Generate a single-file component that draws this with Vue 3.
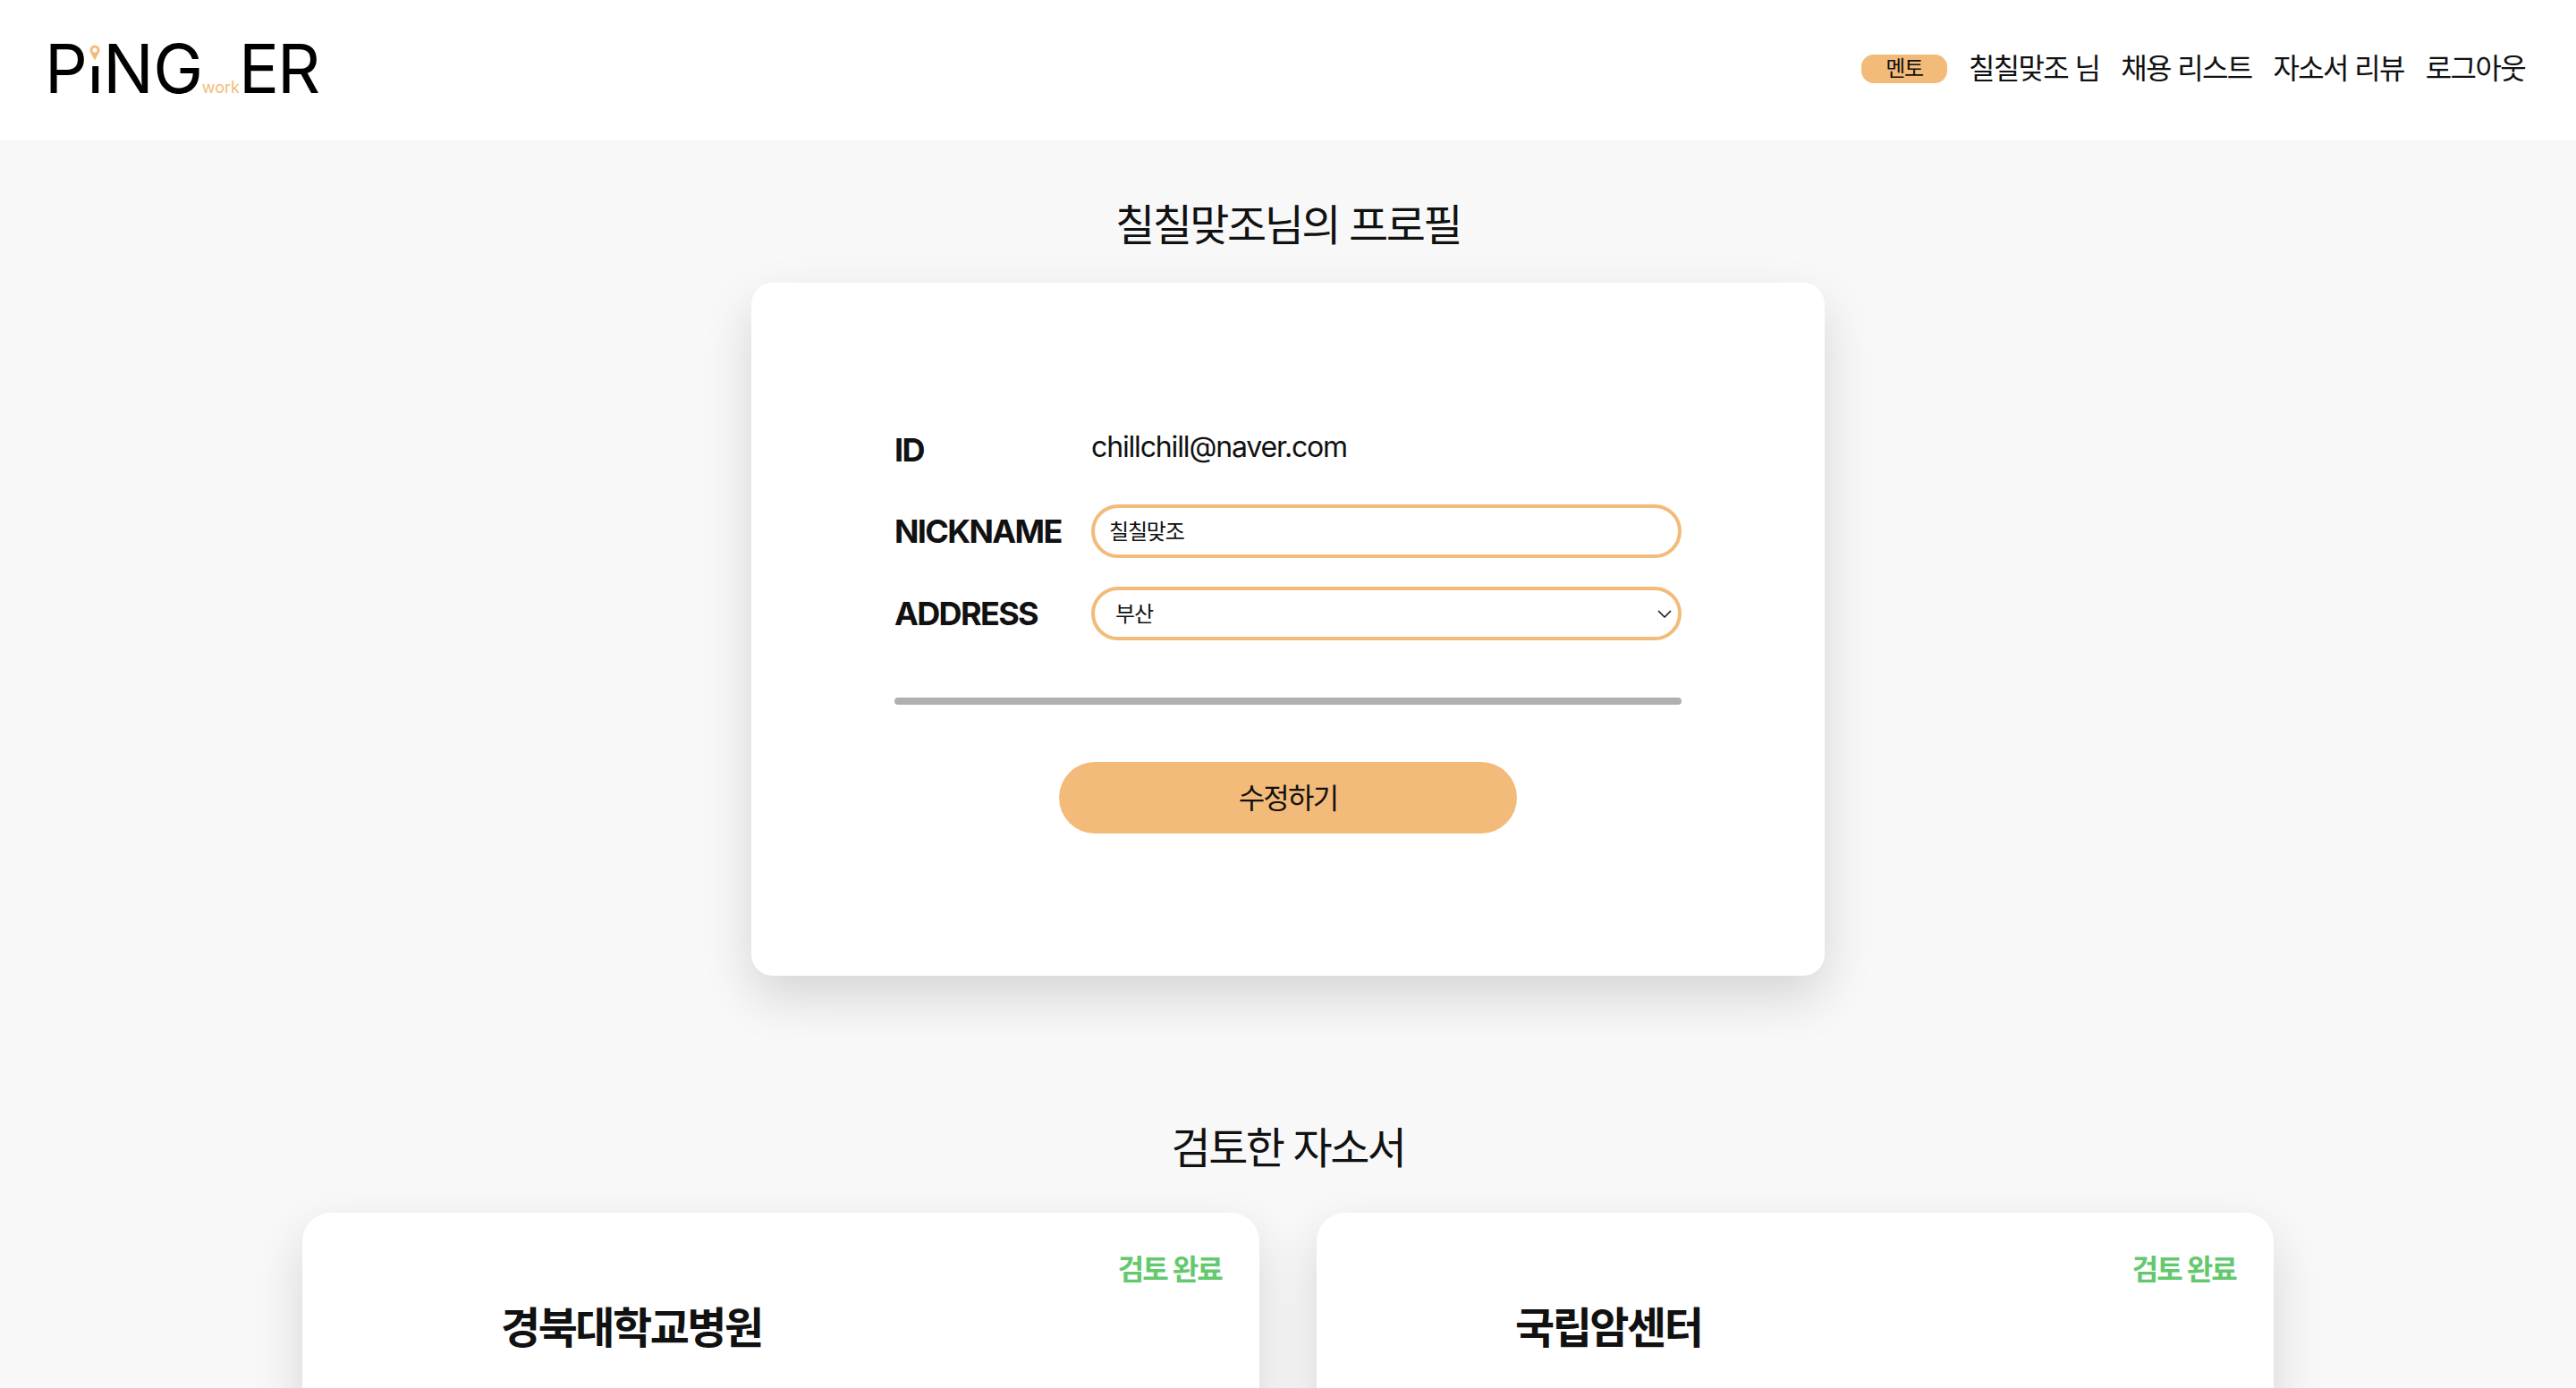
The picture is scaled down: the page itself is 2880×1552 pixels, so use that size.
<script setup>
const navItems = ['칠칠맞조 님', '채용 리스트', '자소서 리뷰', '로그아웃']
const reviews = [
  { id: 1, name: '경북대학교병원', status: '검토 완료' },
  { id: 2, name: '국립암센터', status: '검토 완료' }
]
</script>

<template>
  <div class="page">
    <header class="header">
      <div class="logo">
        <span>P</span>
        <span class="logo-i">
          ı
          <svg class="pin" viewBox="0 0 12 18" width="12" height="18">
            <path d="M6 .5a5.5 5.5 0 0 0-5.5 5.5c0 2.6 2.6 5.6 5.500 11.500C8.900 11.600 11.500 8.600 11.500 6A5.500 5.500 0 0 0 6 .5z" fill="#f3bb79" />
            <circle cx="6" cy="6" r="2.600" fill="#fff" />
          </svg>
        </span>
        <span>NG</span>
        <span class="logo-work">work</span>
        <span class="logo-er">ER</span>
      </div>
      <nav class="nav">
        <span class="badge">멘토</span>
        <a v-for="item in navItems" :key="item" class="nav-link">{{ item }}</a>
      </nav>
    </header>

    <main class="main">
      <h2 class="section-title">칠칠맞조님의 프로필</h2>
      <section class="profile-card">
        <div class="row row-id">
          <span class="label">ID</span>
          <span class="value">chillchill@naver.com</span>
        </div>
        <div class="row">
          <label class="label">NICKNAME</label>
          <input class="field field-input" value="칠칠맞조" />
        </div>
        <div class="row">
          <label class="label">ADDRESS</label>
          <div class="select-wrap">
            <select class="field field-select">
              <option>부산</option>
            </select>
            <svg class="chevron" viewBox="0 0 16 9" width="16" height="9">
              <path d="M1 1l7 7 7-7" fill="none" stroke="#111" stroke-width="1.500" />
            </svg>
          </div>
        </div>
        <div class="divider"></div>
        <button class="submit" type="button">수정하기</button>
      </section>

      <h2 class="section-title second">검토한 자소서</h2>
      <section class="reviews">
        <article v-for="r in reviews" :key="r.id" class="review-card">
          <div class="status">{{ r.status }}</div>
          <h3 class="review-name">{{ r.name }}</h3>
        </article>
      </section>
    </main>
  </div>
</template>

<style>
html, body { margin: 0; background: #f8f8f8; overflow: hidden; }
</style>

<style scoped>
.page {
  height: 1552px;
  overflow: hidden;
  background: #f8f8f8;
  color: #111;
  font-family: Inter, "Noto Sans CJK KR", sans-serif;
}
.header {
  height: 156px;
  background: #fff;
  display: flex;
  align-items: center;
  justify-content: space-between;
  padding: 0 57px 3px 50px;
  box-sizing: border-box;
}
.logo {
  display: flex;
  align-items: baseline;
  font-size: 75px;
  line-height: 90px;
  font-weight: 400;
  color: #000;
  letter-spacing: -0.500px;
}
.logo-i {
  position: relative;
  font-size: 55px;
  line-height: 76px;
  font-weight: 600;
  padding: 0 2px;
}
.pin { position: absolute; left: calc(50% - 6px); top: 4px; }
.logo-work {
  font-size: 18px;
  line-height: 20px;
  color: #f3bb79;
  letter-spacing: 0;
  margin: 0 -1px 0 -1px;
}
.logo-er { letter-spacing: -2px; }
.nav {
  display: flex;
  align-items: center;
  gap: 24px;
  font-size: 32px;
  letter-spacing: -1.650px;
}
.badge {
  width: 96px;
  height: 32px;
  border-radius: 14px;
  background: #f3bb79;
  font-size: 24px;
  letter-spacing: -1.500px;
  line-height: 32px;
  text-align: center;
}
.nav-link { color: #111; line-height: 40px; }
.main {
  display: flex;
  flex-direction: column;
  align-items: center;
}
.section-title {
  margin: 66px 0 34px;
  height: 60px;
  font-size: 48px;
  line-height: 60px;
  font-weight: 400;
  letter-spacing: -2.500px;
}
.section-title.second { margin: 163px 0 42px; }
.profile-card {
  width: 1200px;
  height: 775px;
  box-sizing: border-box;
  padding: 165px 160px 0;
  background: #fff;
  border-radius: 24px;
  box-shadow: 0 24px 56px rgba(0, 0, 0, 0.14);
  display: flex;
  flex-direction: column;
}
.row {
  display: flex;
  align-items: center;
  height: 60px;
  margin-bottom: 32px;
}
.row-id {
  height: 44px;
  margin-bottom: 39px;
  align-items: flex-start;
}
.label {
  width: 220px;
  flex: none;
  font-size: 36px;
  line-height: 44px;
  font-weight: 700;
  letter-spacing: -1.650px;
}
.value {
  font-size: 32px;
  line-height: 38px;
  letter-spacing: -1.150px;
}
.field {
  width: 660px;
  height: 60px;
  box-sizing: border-box;
  border: 4px solid #f3bb79;
  border-radius: 30px;
  background: #fff;
  color: #111;
  outline: none;
  font-family: inherit;
  font-size: 24px;
  letter-spacing: -1.200px;
}
.field-input { padding: 0 16px 3px; }
.field-select {
  padding: 0 23px;
  appearance: none;
  display: block;
}
.select-wrap { position: relative; width: 660px; }
.chevron { position: absolute; right: 11px; top: 26px; }
.divider {
  height: 8px;
  border-radius: 4px;
  background: #b0b0b0;
  margin-top: 32px;
}
.submit {
  width: 512px;
  height: 80px;
  margin: 64px auto 0;
  padding: 0 0 5px;
  border: none;
  border-radius: 40px;
  background: #f3bb79;
  color: #111;
  font-family: inherit;
  font-size: 32px;
  letter-spacing: -1.800px;
}
.reviews {
  display: flex;
  gap: 64px;
  width: 2204px;
}
.review-card {
  flex: 1;
  height: 400px;
  box-sizing: border-box;
  padding: 46px 42px 0 40px;
  background: #fff;
  border-radius: 32px;
  box-shadow: 0 24px 56px rgba(0, 0, 0, 0.14);
}
.status {
  text-align: right;
  color: #64c86e;
  font-size: 32px;
  line-height: 36px;
  font-weight: 700;
  letter-spacing: -1.800px;
}
.review-name {
  margin: 17px 0 0 182px;
  font-size: 48px;
  line-height: 60px;
  font-weight: 700;
  letter-spacing: -2.500px;
}
</style>
